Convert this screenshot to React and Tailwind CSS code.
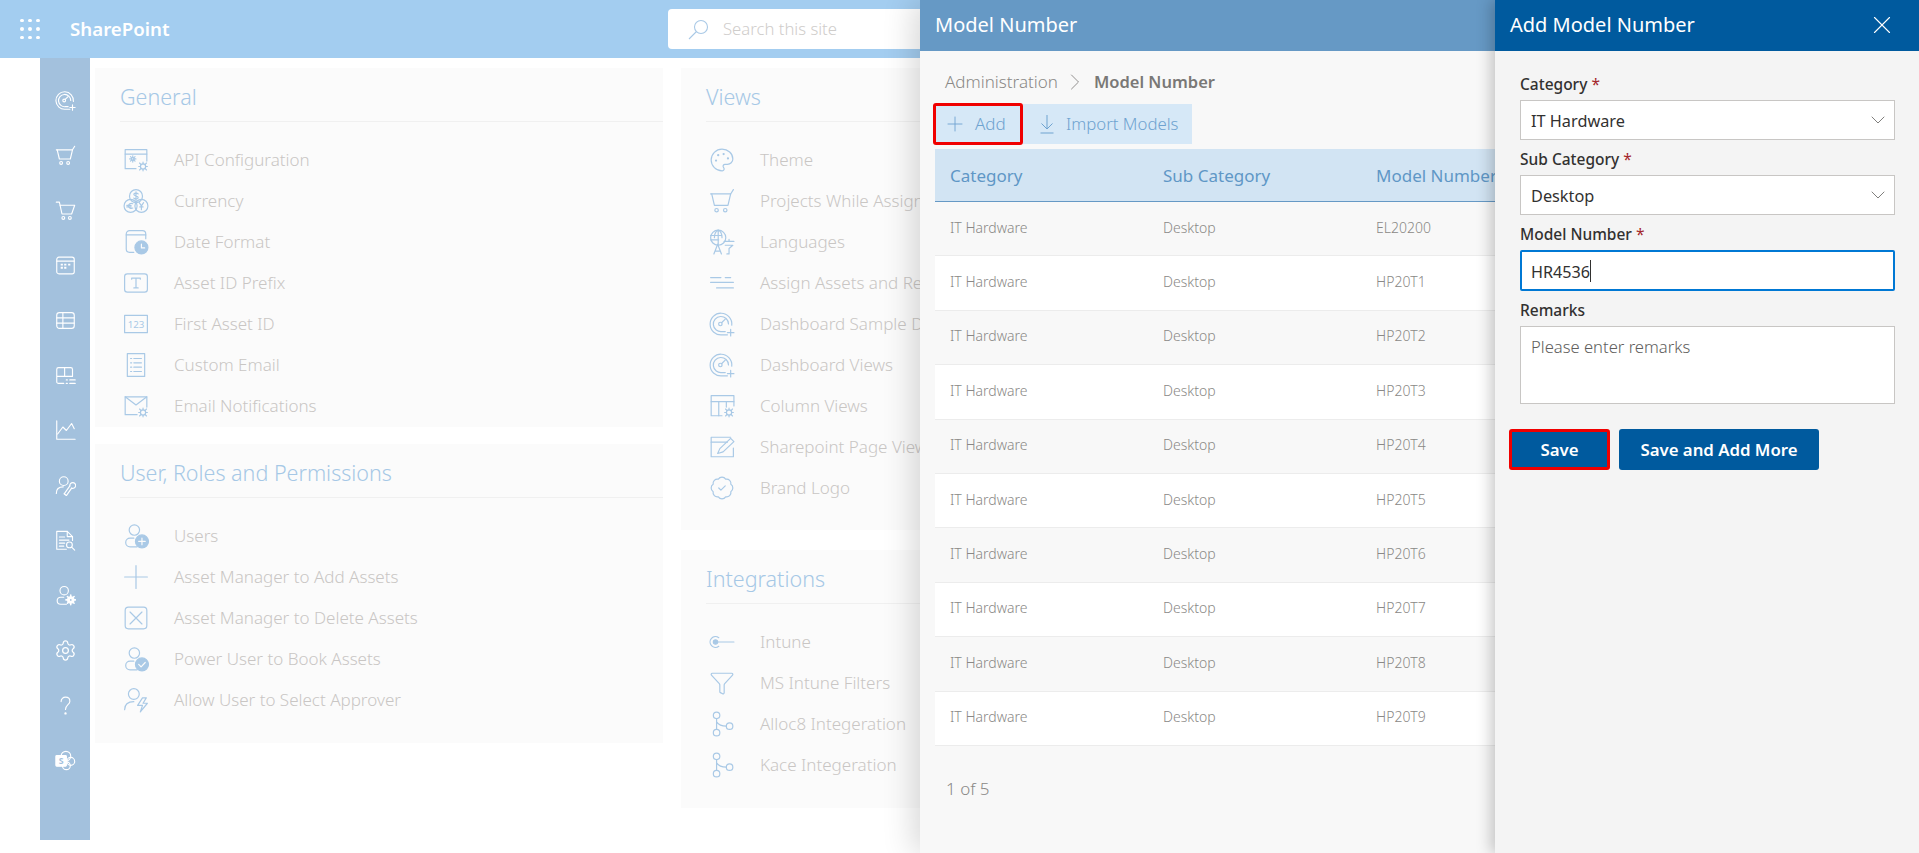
import { ChevronDown, ChevronRight, Plus, X, Settings, Palette, Funnel, BadgeCheck } from "lucide-react";

const font = { fontFamily: '"Noto Sans", "Open Sans", sans-serif' };

// small gear used as a badge on several icons
const Cog = ({ x, y, r = 3, fill = "none" }) => (
  <g>
    <circle cx={x} cy={y} r={r} fill={fill} />
    <path d={`M${x} ${y - r - 1.6}V${y - r}M${x} ${y + r}V${y + r + 1.6}M${x - r - 1.6} ${y}H${x - r}M${x + r} ${y}H${x + r + 1.6}M${x - r - 0.8} ${y - r - 0.8}L${x - r + 0.6} ${y - r + 0.6}M${x + r - 0.6} ${y + r - 0.6}L${x + r + 0.8} ${y + r + 0.8}M${x + r + 0.8} ${y - r - 0.8}L${x + r - 0.6} ${y - r + 0.6}M${x - r + 0.6} ${y + r - 0.6}L${x - r - 0.8} ${y + r + 0.8}`} />
  </g>
);

const Svg = ({ size = 26, sw = 1.1, children }) => (
  <svg width={size} height={size} viewBox="0 0 24 24" fill="none" stroke="currentColor" strokeWidth={sw} strokeLinecap="round" strokeLinejoin="round">
    {children}
  </svg>
);

const GaugePlus = (p) => (
  <Svg {...p}>
    <path d="M21 13A10 10 0 1 0 12 22h5" />
    <path d="M18 12A7 7 0 1 0 12 19h3" />
    <circle cx="10.5" cy="12" r="1.6" />
    <path d="M11.6 10.8L15 7.5" />
    <path d="M20 17v6M17 20h6" />
  </Svg>
);
const CartTilt = (p) => (
  <Svg {...p}>
    <path d="M1.5 5.5H20L22.5 1.500" />
    <path d="M20 5.500L17.500 16H5L2.500 5.500" />
    <circle cx="7" cy="20.500" r="1.600" />
    <circle cx="15" cy="20.500" r="1.600" />
  </Svg>
);
const Cart = (p) => (
  <Svg {...p}>
    <path d="M1.500 2.500H5L8 16H19L22.500 6H5.500" />
    <circle cx="9.500" cy="20.500" r="1.600" />
    <circle cx="17" cy="20.500" r="1.600" />
  </Svg>
);
const CalendarGrid = (p) => (
  <Svg {...p}>
    <rect x="2" y="2.500" width="20" height="19" rx="2.500" />
    <path d="M2 7H22" />
    <path d="M6.500 11h2.500M10.500 11h2.500M15 11h2.500M6.500 14.500h2.500M10.500 14.500h2.500" strokeWidth="2.200" strokeLinecap="butt" />
  </Svg>
);
const TableIcon = (p) => (
  <Svg {...p}>
    <rect x="2" y="3" width="20" height="18" rx="3" />
    <path d="M2 9H22M2 15H22M9 3V21" />
  </Svg>
);
const TableList = (p) => (
  <Svg {...p}>
    <path d="M10 21H4a2 2 0 0 1-2-2V5a2 2 0 0 1 2-2h14a2 2 0 0 1 2 2v8H2M11 3v10" />
    <path d="M13 17h1M17 17h6M13 21h1M17 21h6" strokeWidth="1.600" />
  </Svg>
);
const ChartLine = (p) => (
  <Svg {...p}>
    <path d="M2 1V22H23" />
    <path d="M3 16L9 8L13 12L19 4L22 10" />
  </Svg>
);
const UserWrench = (p) => (
  <Svg {...p}>
    <circle cx="10" cy="7" r="5" />
    <path d="M1.500 21c0-5 3.500-7.500 8-7.500" />
    <path d="M10.500 21.500L17 12.500M13 23.500L19 15" />
    <path d="M10.500 21.500L13 23.500" />
    <path d="M17 12.500A3.300 3.300 0 1 1 19 15" />
  </Svg>
);
const DocSearch = (p) => (
  <Svg {...p}>
    <path d="M13 22H2V1.500H14l6 6V12" />
    <path d="M14 1.500v6h6M5 8h6M5 11.500h11M5 15h6M5 18.500h5" />
    <circle cx="16.500" cy="17" r="3.300" />
    <path d="M19 19.500l3.500 3.500" />
  </Svg>
);
const UserCog = (p) => (
  <Svg {...p}>
    <circle cx="10.500" cy="6.500" r="4.800" />
    <path d="M10 14H6.500a4 4 0 0 0 0 8H13" />
    <circle cx="18" cy="17" r="3.600" fill="currentColor" />
    <path d="M18 11.500V22.500M12.500 17H23.500M14.200 13.200L21.800 20.800M21.800 13.200L14.200 20.800" strokeWidth="1.800" />
    <circle cx="18" cy="17" r="1" fill="#a3c1dd" stroke="none" />
  </Svg>
);
const SharePointMark = (p) => (
  <Svg {...p}>
    <circle cx="12.500" cy="7" r="5.500" />
    <circle cx="18" cy="13" r="4.500" />
    <circle cx="13" cy="18" r="4.500" />
    <rect x="1" y="6.500" width="12" height="12" rx="1" fill="currentColor" />
    <text x="7" y="16" textAnchor="middle" fontSize="10" fontWeight="700" fill="#a3c1dd" stroke="none" style={font}>S</text>
  </Svg>
);
const HelpMark = (p) => (
  <Svg {...p}>
    <path d="M7 7.500A5 5 0 0 1 12 2.500C15 2.500 17 4.500 17 7C17 11 12 11 12 16.500" />
    <circle cx="12" cy="21" r="0.700" fill="currentColor" />
  </Svg>
);
const ApiConfig = (p) => (
  <Svg {...p}>
    <path d="M12 20H2V2.500H22V13" />
    <path d="M2 6.500H22" />
    <Cog x={9} y={11} r={1.300} />
    <Cog x={18.500} y={18} r={2.400} />
  </Svg>
);
const Currency = (p) => (
  <Svg {...p}>
    <circle cx="12" cy="7.500" r="6" />
    <circle cx="7" cy="16.500" r="6" />
    <circle cx="17" cy="16.500" r="6" />
    <path d="M14 5.500c-1-1.200-4-1-4 .5s4 1 4 2.800-3 1.700-4 .5M12 3.500v8" />
    <path d="M9 14.500c-2-1-4 .5-4 2s2 3 4 2M3.500 16h4M3.500 17.500h4" />
    <path d="M15 13.500l2 3 2-3M17 16.500v3.500M15.500 17.500h3" />
  </Svg>
);
const DateFormat = (p) => (
  <Svg {...p}>
    <path d="M10 21.500H6a3 3 0 0 1-3-3V4.500a3 3 0 0 1 3-3h12a3 3 0 0 1 3 3V9" />
    <path d="M3 5.500H21" />
    <circle cx="17" cy="17" r="6" fill="currentColor" />
    <path d="M17 14v3.500h3" stroke="#fbfbfb" />
  </Svg>
);
const TextBox = (p) => (
  <Svg {...p}>
    <rect x="1.500" y="3.500" width="21" height="17" rx="2.500" />
    <path d="M8 8.500V7.500H16V8.500M12 7.500V16.500M10 16.500H14" />
  </Svg>
);
const NumberBox = (p) => (
  <Svg {...p}>
    <rect x="1.500" y="4" width="21" height="16" />
    <text x="12" y="15.500" textAnchor="middle" fontSize="9" fill="currentColor" stroke="none" style={font}>123</text>
  </Svg>
);
const DocLines = (p) => (
  <Svg {...p}>
    <rect x="4" y="1.500" width="16" height="21" />
    <path d="M7 6h1M10 6h7M7 10h1M10 10h7M7 14h1M10 14h7M7 18h1M10 18h7" />
  </Svg>
);
const MailCog = (p) => (
  <Svg {...p}>
    <path d="M13 20H2V3.500H22V13" />
    <path d="M2 3.500L12 11L22 3.500" />
    <Cog x={18.500} y={18} r={2.400} />
  </Svg>
);
const UserBadge = ({ kind, ...p }) => (
  <Svg {...p}>
    <circle cx="10.500" cy="6.500" r="4.800" />
    <path d="M10 14H6.500a4 4 0 0 0 0 8H13" />
    <circle cx="17.500" cy="17" r="6" fill="currentColor" />
    {kind === "plus" ? <path d="M17.500 14v6M14.500 17h6" stroke="#fbfbfb" /> : <path d="M14.500 17l2.200 2.200 3.800-4" stroke="#fbfbfb" />}
  </Svg>
);
const UserBolt = (p) => (
  <Svg {...p}>
    <circle cx="10" cy="6.500" r="5" />
    <path d="M1.500 21c0-5 3.500-7.500 8.500-7.500" />
    <path d="M18 10L13.500 17H18L16 23L22.500 15H18.500L21.500 10Z" />
  </Svg>
);
const BoxX = (p) => (
  <Svg {...p}>
    <rect x="2" y="2" width="20" height="20" rx="3" />
    <path d="M6.500 6.500L17.500 17.500M17.500 6.500L6.500 17.500" />
  </Svg>
);
const PlainPlus = (p) => (
  <Svg {...p}>
    <path d="M12 1.500V22.500M1.500 12H22.500" />
  </Svg>
);
const Globe = (p) => (
  <Svg {...p}>
    <circle cx="8.500" cy="8" r="7" />
    <path d="M1.500 6H12M1.500 10H9M8.500 1V15M5 8c0-4 1.500-6 3.500-7M12 8c0-4-1.500-6-3.500-7" />
    <path d="M4.500 23L8 14l3.500 9M5.500 20.500h5" />
    <path d="M14 11.500h9M18.500 9.500v2M15 15h7l-3.500 3v5h-2" />
  </Svg>
);
const Lines = (p) => (
  <Svg {...p}>
    <path d="M1.500 7H11M15 7H20M1.500 11.500H22.500M7 16.500H22.500" />
  </Svg>
);
const ColumnCog = (p) => (
  <Svg {...p}>
    <path d="M12 21H2V2.500H23V12" />
    <path d="M2 8H23M9 8V21M16 8V13" />
    <Cog x={18.500} y={18} r={2.400} />
  </Svg>
);
const PageEdit = (p) => (
  <Svg {...p}>
    <path d="M22.500 13V21H2V3H20" />
    <path d="M2 7.500H17" />
    <path d="M8 18L10 13.500L20 4L23 7L13 16.500Z" />
  </Svg>
);
const IntuneKey = (p) => (
  <Svg {...p}>
    <path d="M9 8A5 5 0 1 0 9 16" />
    <circle cx="6" cy="12" r="2" fill="currentColor" />
    <path d="M8 12H23" />
  </Svg>
);
const Branch = (p) => (
  <Svg {...p}>
    <circle cx="7" cy="4" r="3" />
    <circle cx="7" cy="20" r="3" />
    <circle cx="19" cy="14" r="3" />
    <path d="M7 7V17M7 10C9 13 12 14 16 14" />
  </Svg>
);
const SearchFlip = () => (
  <svg width="21" height="21" viewBox="0 0 21 21" fill="none" stroke="currentColor" strokeWidth="1.100">
    <circle cx="13" cy="8" r="6.500" />
    <path d="M8.500 12.500L1 20" />
  </svg>
);
const DownloadArrow = () => (
  <svg width="14" height="20" viewBox="0 0 14 20" fill="none" stroke="currentColor" strokeWidth="1">
    <path d="M7 1V15M1.500 9.500L7 15L12.500 9.500M0.500 19H13.500" />
  </svg>
);

const SideGear = () => <Settings size={23} strokeWidth={1.300} />;
const sideIcons = [GaugePlus, CartTilt, Cart, CalendarGrid, TableIcon, TableList, ChartLine, UserWrench, DocSearch, UserCog, SideGear, HelpMark, SharePointMark];

const general = [
  [ApiConfig, "API Configuration"],
  [Currency, "Currency"],
  [DateFormat, "Date Format"],
  [TextBox, "Asset ID Prefix"],
  [NumberBox, "First Asset ID"],
  [DocLines, "Custom Email"],
  [MailCog, "Email Notifications"],
];
const users = [
  [(p) => <UserBadge kind="plus" {...p} />, "Users"],
  [PlainPlus, "Asset Manager to Add Assets"],
  [BoxX, "Asset Manager to Delete Assets"],
  [(p) => <UserBadge kind="check" {...p} />, "Power User to Book Assets"],
  [UserBolt, "Allow User to Select Approver"],
];
const views = [
  [() => <Palette size={26} strokeWidth={1.100} />, "Theme"],
  [CartTilt, "Projects While Assigning Assets"],
  [Globe, "Languages"],
  [Lines, "Assign Assets and Return Assets"],
  [GaugePlus, "Dashboard Sample Data"],
  [GaugePlus, "Dashboard Views"],
  [ColumnCog, "Column Views"],
  [PageEdit, "Sharepoint Page Views"],
  [() => <BadgeCheck size={26} strokeWidth={1.100} />, "Brand Logo"],
];
const integrations = [
  [IntuneKey, "Intune"],
  [() => <Funnel size={26} strokeWidth={1.100} />, "MS Intune Filters"],
  [Branch, "Alloc8 Integeration"],
  [Branch, "Kace Integeration"],
];

const rows = ["EL20200", "HP20T1", "HP20T2", "HP20T3", "HP20T4", "HP20T5", "HP20T6", "HP20T7", "HP20T8", "HP20T9"];

function Section({ title, items, className }) {
  return (
    <div className={`bg-[#fbfbfb] pl-[25px] overflow-hidden ${className}`}>
      <h2 className="h-[54px] pt-[14px] border-b border-[#f0f0f0] text-[21.500px] leading-[30px] font-light text-[#a6c8e6] whitespace-nowrap">{title}</h2>
      <div className="pt-[17px]">
        {items.map(([Icon, label]) => (
          <div key={label} className="flex items-center h-[41px]">
            <span className="w-[54px] pl-[3px] text-[#a9c9e6] flex">
              <Icon />
            </span>
            <span className="text-[17px] text-[#c9c6c4] whitespace-nowrap font-light">{label}</span>
          </div>
        ))}
      </div>
    </div>
  );
}

function Field({ label, required, children, className = "" }) {
  return (
    <div className={className}>
      <div className="text-[15.500px] leading-[20px] text-[#323130] font-medium">
        {label}
        {required && <span className="text-[#a4262c] font-normal"> *</span>}
      </div>
      {children}
    </div>
  );
}

function SelectBox({ value }) {
  return (
    <div className="mt-[6px] h-[40px] bg-white border border-[#c8c6c4] flex items-center justify-between pl-[10px] pr-[4px] text-[16.300px] text-[#323130]">
      <span className="pt-[3px]">{value}</span>
      <ChevronDown size={24} strokeWidth={0.800} className="text-[#605e5c]" />
    </div>
  );
}

export default function App() {
  return (
    <div style={font} className="relative w-[1919px] h-[853px] overflow-hidden bg-white">
      {/* Suite bar */}
      <div className="h-[58px] bg-[#a3cdf0] flex items-center">
        <div className="w-[70px] pl-[20px]">
          <div className="grid grid-cols-3 gap-[5px] w-[19px]">
            {[0, 1, 2, 3, 4, 5, 6, 7, 8].map((n) => (
              <span key={n} className="w-[3.500px] h-[3.500px] rounded-full bg-white" />
            ))}
          </div>
        </div>
        <span className="text-white text-[18.700px] font-semibold w-[598px]">SharePoint</span>
        <div className="w-[400px] h-[40px] bg-white rounded-[4px] flex items-center pl-[20px] text-[#a9c9e6]">
          <SearchFlip />
          <span className="ml-[14px] text-[16.700px] text-[#cfcdcb] font-light">Search this site</span>
        </div>
      </div>

      {/* Page under the panels */}
      <div className="flex">
        <div className="ml-[40px] w-[50px] h-[782px] bg-[#a3c1dd] pt-[15px] text-white">
          {sideIcons.map((Icon, i) => (
            <div key={i} className="h-[55px] flex items-center justify-center">
              <Icon size={21} sw={1.300} />
            </div>
          ))}
        </div>
        <div className="ml-[5px] pt-[10px] w-[568px]">
          <Section title="General" items={general} className="h-[359px]" />
          <Section title="User, Roles and Permissions" items={users} className="mt-[17px] h-[299px]" />
        </div>
        <div className="ml-[18px] pt-[10px] w-[568px]">
          <Section title="Views" items={views} className="h-[462px]" />
          <Section title="Integrations" items={integrations} className="mt-[20px] h-[258px]" />
        </div>
      </div>

      {/* Model Number panel */}
      <div className="absolute top-0 bottom-0 left-[920px] w-[575px] bg-[#f8f8f8] overflow-hidden shadow-[-6px_0_30px_rgba(0,0,0,0.16)]">
        <div className="h-[51px] bg-[#6699c5] flex items-center pl-[15px] pb-[2px] text-white text-[20px]">Model Number</div>
        <div className="flex items-center pl-[25px] pt-[10px] h-[52px] text-[17px] text-[#8a8886]">
          <span className="font-light">Administration</span>
          <ChevronRight size={28} strokeWidth={0.800} className="ml-[3px] mr-[5px]" />
          <span className="font-semibold text-[16.500px] text-[#7a7876]">Model Number</span>
        </div>
        <div className="flex items-center ml-[13px] h-[42px]">
          <div className="w-[90px] h-[42px] bg-[#d6e8f7] border-[3px] border-[#f00000] rounded-[3px] flex items-center pl-[7px] text-[#6fa3d0]">
            <Plus size={24} strokeWidth={0.900} />
            <span className="ml-[8px] text-[17px] font-light">Add</span>
          </div>
          <div className="w-[169px] h-[40px] bg-[#d6e8f7] flex items-center pl-[17px] text-[#6fa3d0]">
            <DownloadArrow />
            <span className="ml-[12px] text-[16.800px] font-light">Import Models</span>
          </div>
        </div>
        <div className="mt-[4px] ml-[15px] w-[700px]">
          <div className="flex items-center h-[53px] bg-[#d2e4f3] border-b border-[#6699c5] pl-[15px] pt-[2px] text-[17px] text-[#5f97c6]">
            <span className="w-[213px]">Category</span>
            <span className="w-[213px]">Sub Category</span>
            <span>Model Number</span>
          </div>
          {rows.map((model, i) => (
            <div key={model} className={`flex items-center h-[54.400px] border-b border-[#ececec] pl-[15px] pb-[3px] text-[14px] font-light text-[#8a8886] ${i % 2 ? "bg-white" : "bg-[#f8f8f8]"}`}>
              <span className="w-[213px]">IT Hardware</span>
              <span className="w-[213px]">Desktop</span>
              <span>{model}</span>
            </div>
          ))}
        </div>
        <div className="mt-[30px] ml-[26px] text-[17px] text-[#8a8886] font-light">1 of 5</div>
      </div>

      {/* Add Model Number panel */}
      <div className="absolute top-0 bottom-0 left-[1495px] w-[424px] bg-[#f4f4f4] shadow-[-4px_0_14px_rgba(0,0,0,0.22)]">
        <div className="h-[51px] bg-[#005a9e] flex items-center justify-between pl-[15px] pr-[22px] pb-[2px] text-white text-[20px]">
          Add Model Number
          <X size={30} strokeWidth={0.900} />
        </div>
        <div className="pl-[25px] pr-[24px] pt-[23px]">
          <Field label="Category" required>
            <SelectBox value="IT Hardware" />
          </Field>
          <Field label="Sub Category" required className="mt-[9px]">
            <SelectBox value="Desktop" />
          </Field>
          <Field label="Model Number" required className="mt-[9px]">
            <div className="mt-[6px] h-[41px] bg-white border-2 border-[#0078d4] rounded-[2px] flex items-center pl-[9px] text-[16.200px] text-[#323130]">
              <span className="pt-[3px]">HR4536</span>
              <span className="w-px h-[22px] bg-[#323130]" />
            </div>
          </Field>
          <Field label="Remarks" className="mt-[9px]">
            <div className="mt-[6px] h-[78px] bg-white border border-[#c8c6c4] pl-[10px] pt-[8px] text-[16.600px] text-[#605e5c] font-light">Please enter remarks</div>
          </Field>
        </div>
        <div className="flex items-center mt-[25px] ml-[14px]">
          <button className="w-[101px] h-[41px] bg-[#005a9e] border-[3px] border-[#f00000] rounded-[3px] text-white text-[16.800px] font-semibold">Save</button>
          <button className="ml-[9px] w-[200px] h-[41px] bg-[#005a9e] rounded-[3px] text-white text-[16.800px] font-semibold">Save and Add More</button>
        </div>
      </div>
    </div>
  );
}
